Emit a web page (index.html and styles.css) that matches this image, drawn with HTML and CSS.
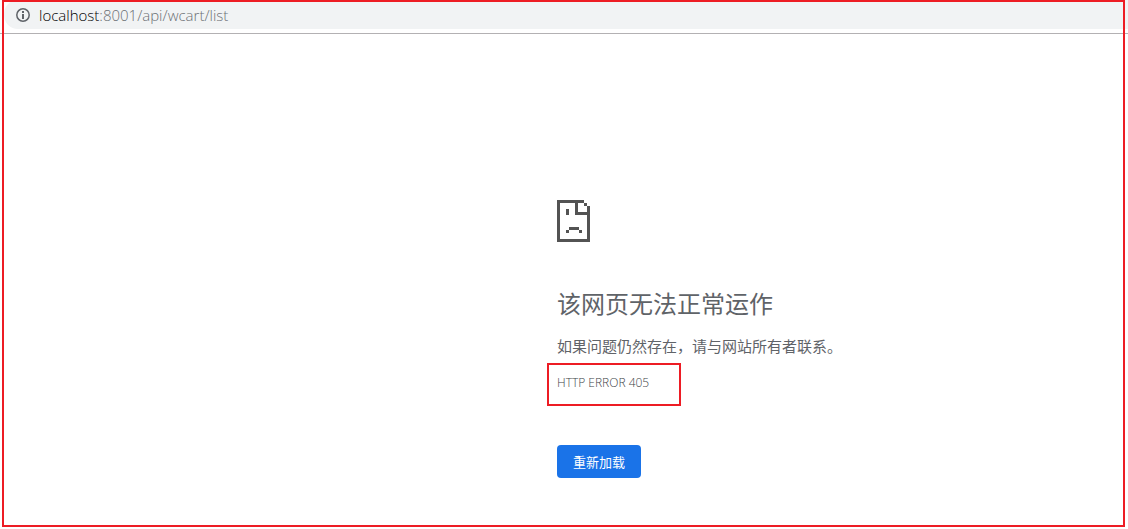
FILE: index.html
```html
<!DOCTYPE html>
<html lang="zh-CN">

<head>
  <meta charset="UTF-8">
  <meta name="viewport" content="width=device-width, initial-scale=1.0">
  <title>localhost</title>
  <link rel="stylesheet" href="styles.css">
</head>

<body>
  <header class="toolbar">
    <div class="address-bar">
      <svg class="info-icon" width="14" height="14" viewBox="0 0 14 14" aria-hidden="true">
        <circle cx="7" cy="7" r="6.2" fill="none" stroke="#5f6368" stroke-width="1.5" />
        <path d="M6 3h2v2H6zM6 6h2v5H6z" fill="#5f6368" />
      </svg>
      <p class="url"><span class="host">localhost</span>:8001/api/wcart/list</p>
    </div>
  </header>

  <main class="error-page">
    <svg class="sad-page" width="33" height="42" viewBox="0 0 33 42" shape-rendering="crispEdges" aria-hidden="true">
      <!-- sheet outline and folded corner -->
      <path d="M0 0h27v3H3v36h27V6h3v36H0zM27 3h3v3h-3zM18 3h3v9h9v3H18z" />
      <!-- face -->
      <path d="M9 9h3v6H9zM12 27h10v3H12zM9 30h3v3H9zM22 30h3v3h-3z" />
    </svg>
    <h1>该网页无法正常运作</h1>
    <p class="summary">如果问题仍然存在，请与网站所有者联系。</p>
    <div class="error-code">HTTP ERROR 405</div>
    <button class="reload" type="button">重新加载</button>
  </main>

  <div class="frame"></div>
</body>

</html>
```
FILE: styles.css
```css
/* General Reset */
* {
  box-sizing: border-box;
}

body {
  margin: 0;
  min-height: 100vh;
  position: relative;
  background: #fff;
  color: #5f6368;
  font-family: "Open Sans", "Noto Sans CJK SC", sans-serif;
}

h1,
p {
  margin: 0;
}

/* Address bar */
.toolbar {
  padding: 0 0 4px 4px;
  border-bottom: 1px solid #b3b1b3;
}

.address-bar {
  display: flex;
  align-items: center;
  gap: 9px;
  height: 29px;
  padding-left: 12px;
  background: #f1f3f4;
  border-radius: 14px 0 0 14px;
}

.url {
  color: #6c7075;
  font-size: 15px;
  font-weight: 350;
  line-height: 18px;
}

.host {
  color: #000;
}

/* Error content */
.error-page {
  display: flex;
  flex-direction: column;
  align-items: flex-start;
  padding: 166px 16px 48px calc(50% - 7px);
}

.sad-page {
  fill: #535353;
}

h1 {
  margin-top: 44px;
  font-size: 24px;
  font-weight: 400;
  line-height: 36px;
}

.summary {
  margin-top: 14px;
  font-size: 15px;
  line-height: 20px;
}

.error-code {
  width: 134px;
  height: 43px;
  margin: 7px 0 0 -10px;
  padding: 10px 8px;
  border: 2px solid #ed1c24;
  color: #404347;
  font-size: 12px;
  font-weight: 350;
  line-height: 16px;
}

.reload {
  margin-top: 39px;
  padding: 0 16px;
  height: 33px;
  border: 0;
  border-radius: 4px;
  background: #1a73e8;
  color: #fff;
  font-family: inherit;
  font-size: 13px;
  cursor: pointer;
}

/* Red outline over the whole page */
.frame {
  position: absolute;
  inset: 0 3px 2px 2px;
  border: 2px solid #ed1c24;
  pointer-events: none;
}
```
